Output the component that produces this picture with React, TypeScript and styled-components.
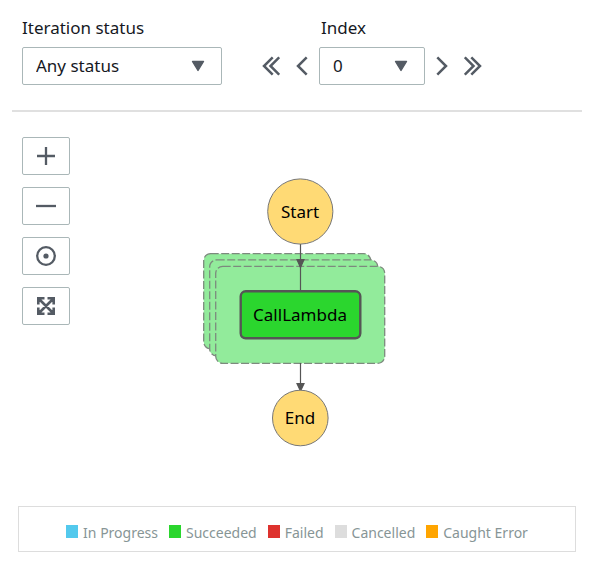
import React from "react";
import styled, { createGlobalStyle } from "styled-components";

const INK = "#545b64";
const LINE = "#aab7b8";

const GlobalStyle = createGlobalStyle`
  *, *::before, *::after { box-sizing: border-box; }
  body {
    margin: 0;
    background: #fff;
    color: #16191f;
    font-family: "Noto Sans", "Open Sans", sans-serif;
    font-size: 17px;
    line-height: 22px;
  }
`;

const Page = styled.main`
  display: flex;
  flex-direction: column;
`;

const Filters = styled.header`
  display: flex;
  align-items: flex-end;
  gap: 40px;
  margin: 0 9px 0 12px;
  padding: 17px 10px 25px;
  border-bottom: 2px solid #e0e0e0;
`;

const Field = styled.div<{ $width: number }>`
  display: flex;
  flex-direction: column;
  gap: 8px;
  width: ${(p) => p.$width}px;
`;

const FieldLabel = styled.label<{ $indent?: boolean }>`
  padding-left: ${(p) => (p.$indent ? 2 : 0)}px;
`;

const SelectBox = styled.div`
  display: grid;
  align-items: center;

  > * {
    grid-area: 1 / 1;
  }

  > svg {
    justify-self: end;
    margin-right: 17px;
    pointer-events: none;
  }
`;

const Select = styled.select`
  appearance: none;
  width: 100%;
  height: 38px;
  padding: 0 36px 0 13px;
  border: 1px solid ${LINE};
  border-radius: 2px;
  background: #fff;
  color: inherit;
  font: inherit;
`;

const Pager = styled.div`
  display: flex;
  align-items: flex-end;
  gap: 11px;
`;

const PagerSteps = styled.div`
  display: flex;
  gap: 16px;
`;

const StepButton = styled.button`
  display: flex;
  align-items: center;
  height: 38px;
  padding: 0;
  border: 0;
  background: none;
  color: ${INK};
  cursor: pointer;
`;

const Canvas = styled.section`
  display: grid;
  grid-template-columns: 48px 1fr 48px;
  padding: 25px 13px 0 22px;
`;

const Tools = styled.div`
  display: flex;
  flex-direction: column;
  gap: 12px;
`;

const ToolButton = styled.button`
  display: flex;
  align-items: center;
  justify-content: center;
  height: 38px;
  padding: 0;
  border: 1px solid ${LINE};
  border-radius: 2px;
  background: #fff;
  color: ${INK};
  cursor: pointer;
`;

const Graph = styled.svg`
  justify-self: center;
  margin-top: 40px;
`;

const Legend = styled.ul`
  display: flex;
  flex-wrap: wrap;
  justify-content: center;
  gap: 4px 11px;
  margin: 59px 15px 11px 18px;
  padding: 15px 10px 7px;
  border: 1px solid #ddd;
  list-style: none;
  color: #879596;
  font-size: 14px;
`;

const LegendItem = styled.li`
  display: flex;
  align-items: center;
  gap: 5px;
`;

const Swatch = styled.span<{ $color: string }>`
  width: 12px;
  height: 13px;
  margin-bottom: 3px;
  background: ${(p) => p.$color};
`;

const Caret = () => (
  <svg width="14" height="12" viewBox="0 0 14 12" aria-hidden="true">
    <path d="M1.5 1.5h11L7 10.5z" fill={INK} stroke={INK} strokeWidth="1.4" strokeLinejoin="round" />
  </svg>
);

const Chevron = ({ double, flip }: { double?: boolean; flip?: boolean }) => {
  const w = double ? 18 : 12;
  return (
    <svg width={w} height="20" viewBox={`0 0 ${w} 20`} fill="none" stroke="currentColor" strokeWidth="2.5" aria-hidden="true">
      <g transform={flip ? `translate(${w} 0) scale(-1 1)` : undefined}>
        <path d="M10.7 1.3L2 10l8.7 8.7" />
        {double && <path d="M17.2 1.3L8.5 10l8.7 8.7" />}
      </g>
    </svg>
  );
};

const toolIcons = [
  { label: "Zoom in", art: <path d="M1 10h18M10 1v18" /> },
  { label: "Zoom out", art: <path d="M0 10h20" /> },
  {
    label: "Center",
    art: (
      <>
        <circle cx="10" cy="10" r="8.8" />
        <circle cx="10" cy="10" r="2.6" fill="currentColor" stroke="none" />
      </>
    ),
  },
  {
    label: "Fit to screen",
    art: (
      <path
        d="M3 3l14 14M17 3L3 17M2.300 8.500V2.300H8.500M11.500 2.300h6.200v6.200M17.700 11.500v6.200h-6.200M8.500 17.700H2.300v-6.200"
        strokeWidth="2.6"
      />
    ),
  },
];

const statuses = [
  { name: "In Progress", color: "#53c9ed" },
  { name: "Succeeded", color: "#2bd62e" },
  { name: "Failed", color: "#de322e" },
  { name: "Cancelled", color: "#dddddd" },
  { name: "Caught Error", color: "#ffa500" },
];

const StateGraph = () => (
  <Graph width="194" height="270" viewBox="203 177 194 270" role="img" aria-label="State machine graph">
    <g fill="#92eb9b" stroke="#7d8a7e" strokeWidth="1.3" strokeDasharray="8 2.5">
      <rect x="203.7" y="253.7" width="167" height="95" rx="7" />
      <rect x="209.7" y="259.9" width="168" height="96" rx="7" />
      <rect x="215.7" y="266.3" width="169" height="97" rx="7" />
    </g>
    <g stroke="#555" strokeWidth="1.2">
      <path d="M300.5 244v47M300.5 363v22" />
      <path d="M297 259.5h7l-3.5 8zM297 383.5h7l-3.5 7.5z" fill="#555" />
    </g>
    <g fill="#ffda75" stroke="#777" strokeWidth="1">
      <circle cx="300.3" cy="211.5" r="32.6" />
      <circle cx="300.3" cy="418" r="27.8" />
    </g>
    <rect x="240.7" y="291.3" width="119.6" height="47" rx="5" fill="#2bd62e" stroke="#555" strokeWidth="2.4" />
    <g textAnchor="middle" fill="#000">
      <text x="300" y="218">Start</text>
      <text x="300" y="321">CallLambda</text>
      <text x="300" y="424">End</text>
    </g>
  </Graph>
);

export default function App() {
  return (
    <Page>
      <GlobalStyle />
      <Filters>
        <Field $width={200}>
          <FieldLabel htmlFor="status">Iteration status</FieldLabel>
          <SelectBox>
            <Select id="status" defaultValue="any">
              <option value="any">Any status</option>
            </Select>
            <Caret />
          </SelectBox>
        </Field>
        <Pager>
          <PagerSteps>
            <StepButton aria-label="First iteration"><Chevron double /></StepButton>
            <StepButton aria-label="Previous iteration"><Chevron /></StepButton>
          </PagerSteps>
          <Field $width={106}>
            <FieldLabel htmlFor="index" $indent>Index</FieldLabel>
            <SelectBox>
              <Select id="index" defaultValue="0">
                <option value="0">0</option>
              </Select>
              <Caret />
            </SelectBox>
          </Field>
          <PagerSteps>
            <StepButton aria-label="Next iteration"><Chevron flip /></StepButton>
            <StepButton aria-label="Last iteration"><Chevron double flip /></StepButton>
          </PagerSteps>
        </Pager>
      </Filters>
      <Canvas>
        <Tools>
          {toolIcons.map((tool) => (
            <ToolButton key={tool.label} aria-label={tool.label}>
              <svg width="20" height="20" viewBox="0 0 20 20" fill="none" stroke="currentColor" strokeWidth="2.3" aria-hidden="true">
                {tool.art}
              </svg>
            </ToolButton>
          ))}
        </Tools>
        <StateGraph />
      </Canvas>
      <Legend>
        {statuses.map((status) => (
          <LegendItem key={status.name}>
            <Swatch $color={status.color} />
            {status.name}
          </LegendItem>
        ))}
      </Legend>
    </Page>
  );
}
